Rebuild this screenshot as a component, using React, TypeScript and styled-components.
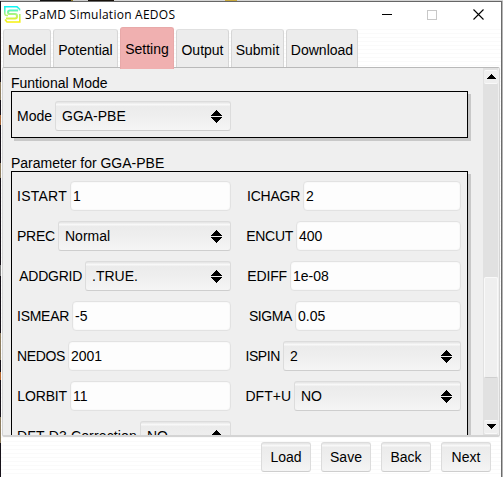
import React from "react";
import styled, { createGlobalStyle, css } from "styled-components";

const GlobalStyle = createGlobalStyle`
  * { box-sizing: border-box; }
  body { margin: 0; overflow: hidden; background: #d8d8d8; }
`;

const Desktop = styled.div`
  width: 503px;
  height: 477px;
  padding: 1px 1px 0 1px;
  overflow: hidden;
  font: 14px/16px "Liberation Sans", Arial, sans-serif;
  color: #000;
  background:
    linear-gradient(90deg, #ccc 0 40px, #111 40px 53px, #16100a 53px 71px, #8b7524 71px 73px, #ccc 73px 88px, #16100a 88px 114px, #d4d4d4 114px 225px, #c9a93c 225px 237px, #d4d4d4 237px) 0 0 / 503px 1px no-repeat,
    linear-gradient(#17121a 0 10px, #282020 10px 72px, #17121a 72px 82px, #8b7b5e 82px 100px, #17121a 100px 115px, #a4673a 115px 125px, #17121a 125px 163px, #8b7b5e 163px 178px, #17121a 178px 265px, #777 265px 276px, #17121a 276px 333px, #8b7b5e 333px 360px, #17121a 360px 372px, #b1642c 372px 380px, #17121a 380px 417px, #8b7b5e 417px 443px, #17121a 443px) 0 0 / 1px 477px no-repeat,
    #b5b5b5;
`;

const Window = styled.div`
  display: flex;
  flex-direction: column;
  height: 476px;
  border-top: 1px solid #666;
  border-right: 1px solid #6b6b6b;
  background: repeating-linear-gradient(#fff 0 3px, #fafafa 3px 4px);
`;

const TitleBar = styled.header`
  display: flex;
  align-items: center;
  flex: none;
  height: 25px;
  padding-left: 3px;
  background: #fff;
`;

const Title = styled.span`
  flex: 1;
  margin-left: 4px;
  font: 12px/16px "Open Sans", "Noto Sans", sans-serif;
  letter-spacing: 0.25px;
  white-space: nowrap;
`;

const WindowControls = styled.div`
  display: flex;
  align-items: center;
  gap: 35px;
  padding-right: 17px;
  svg { display: block; }
`;

const TabBar = styled.nav`
  display: flex;
  align-items: flex-end;
  flex: none;
  height: 42px;
  padding-left: 2px;
  position: relative;
  z-index: 1;
  margin-bottom: -2px;
`;

const Tab = styled.div<{ $width: number; $active?: boolean }>`
  flex: none;
  width: ${(p) => p.$width}px;
  height: 38px;
  margin: 0 2px 2px 0;
  padding-top: 12px;
  border: 1px solid #d6d6d6;
  border-top-color: #e0e0e0;
  border-bottom: 0;
  border-radius: 3px 3px 0 0;
  background: #ececec;
  text-align: center;
  white-space: nowrap;
  ${(p) =>
    p.$active &&
    css`
      height: 42px;
      margin-bottom: 0;
      padding-top: 13px;
      border-color: #e8a9a9;
      background: #f0b0b0;
    `}
`;

const Panel = styled.main`
  display: flex;
  flex: none;
  height: 370px;
  margin: 0 1px 0 1px;
  border: 1px solid #d4d4d4;
  border-top: 1px solid #b9b9b9;
  border-bottom-width: 2px;
  border-radius: 2px;
  background: #efefef;
  overflow: hidden;
`;

const Content = styled.div`
  flex: 1;
  height: 367px;
  padding: 7px 0 0 8px;
  overflow: hidden;
`;

const Group = styled.section`
  width: 457px;
  margin-bottom: 17px;
`;

const Legend = styled.h2`
  margin: 0;
  font: inherit;
  height: 16px;
`;

const Frame = styled.div`
  display: grid;
  grid-template-columns: 219px 230px;
  row-gap: 10px;
  padding: 9px 0 6px 0;
  border: 1px solid #000;
  box-shadow: 3px 3px 0 #c8c8c8;
`;

const Field = styled.div`
  display: flex;
  align-items: center;
  height: 30px;
`;

const Label = styled.label<{ $width: number; $tracking: number }>`
  flex: none;
  width: ${(p) => p.$width}px;
  padding-right: 3px;
  display: flex;
  justify-content: flex-end;
  letter-spacing: ${(p) => p.$tracking}px;
  white-space: nowrap;
`;

const TextBox = styled.div`
  flex: 1;
  height: 30px;
  padding: 6px 2px;
  border: 1px solid #e2e2e2;
  border-radius: 4px;
  background: #fdfdfd;
  box-shadow: inset 0 0 2px #f0f0f0;
`;

const raised = css`
  border: 1px solid #dcdcdc;
  border-bottom-color: #cecece;
  border-radius: 3px;
  background: linear-gradient(#e7e7e7 0 1px, #f8f8f8 2px 3px, #ebebeb 4px, #efefef 16px, #f5f5f5);
`;

const SelectBox = styled.div`
  ${raised}
  display: flex;
  align-items: center;
  justify-content: space-between;
  flex: 1;
  height: 30px;
  padding: 0 8px 0 6px;
  svg { display: block; }
`;

const ScrollBar = styled.div`
  display: flex;
  flex-direction: column;
  flex: none;
  width: 15px;
  margin-right: 1px;
  padding: 2px 0 1px 1px;
  background: #e1e1e1;
`;

const ScrollButton = styled.div`
  display: flex;
  align-items: center;
  justify-content: center;
  flex: none;
  height: 14px;
  padding: 0 1px 1px 0;
  border-top: 1px solid #fafafa;
  border-bottom: 1px solid #f9f9f9;
  border-radius: 2px;
  background: #efefef;
`;

const Track = styled.div`
  flex: 1;
  padding-top: 193px;
`;

const Thumb = styled.div`
  height: 101px;
  border: 1px solid #f9f9f9;
  border-bottom-color: #cfcfcf;
  border-radius: 2px;
  background: #efefef;
`;

const Footer = styled.footer`
  display: flex;
  justify-content: flex-end;
  gap: 10px;
  padding: 5px 10px 0 0;
`;

const Button = styled.button`
  ${raised}
  width: 50px;
  height: 30px;
  padding: 0;
  font: inherit;
  color: #000;
`;

type FieldSpec = {
  name: string;
  value: string;
  width: number;
  tracking?: number;
  select?: boolean;
};

const modeField: FieldSpec = { name: "Mode", value: "GGA-PBE", width: 43, select: true };

const parameters: FieldSpec[] = [
  { name: "ISTART", value: "1", width: 58, tracking: 0.25 },
  { name: "ICHAGR", value: "2", width: 72, tracking: -0.25 },
  { name: "PREC", value: "Normal", width: 46, tracking: -0.2, select: true },
  { name: "ENCUT", value: "400", width: 65, tracking: -0.3 },
  { name: "ADDGRID", value: ".TRUE.", width: 73, tracking: -0.25, select: true },
  { name: "EDIFF", value: "1e-08", width: 59, tracking: -0.15 },
  { name: "ISMEAR", value: "-5", width: 60, tracking: -0.3 },
  { name: "SIGMA", value: "0.05", width: 64, tracking: -0.4 },
  { name: "NEDOS", value: "2001", width: 56, tracking: -0.35 },
  { name: "ISPIN", value: "2", width: 52, tracking: -0.4, select: true },
  { name: "LORBIT", value: "11", width: 58, tracking: -0.15 },
  { name: "DFT+U", value: "NO", width: 63, select: true },
  { name: "DFT-D3 Correction", value: "NO", width: 128, tracking: 0.15, select: true },
];

const tabs = [
  { name: "Model", width: 48 },
  { name: "Potential", width: 65 },
  { name: "Setting", width: 54 },
  { name: "Output", width: 53 },
  { name: "Submit", width: 53 },
  { name: "Download", width: 72 },
];

function Logo() {
  return (
    <svg width="17" height="17" viewBox="0 0 17 17">
      <defs>
        <linearGradient id="logo" x1="0" y1="0" x2="0" y2="17" gradientUnits="userSpaceOnUse">
          <stop offset="0" stopColor="#00f4ff" />
          <stop offset=".5" stopColor="#b0f47a" />
          <stop offset="1" stopColor="#fff000" />
        </linearGradient>
      </defs>
      <g fill="none" stroke="url(#logo)">
        <path strokeWidth="1.6" d="M0 .8H13L15.5 3V4.5M.8 0V8Q1 9.5 3 9.5H4M15.8 8V16H3L1 13.5" />
        <path strokeWidth="2" d="M14 4.5H6Q4 4.5 4 6.3T6 8H11Q13 8 13 10.2T11 12.5H2" />
      </g>
    </svg>
  );
}

function UpDown() {
  return (
    <svg width="12" height="13" viewBox="0 0 12 13" shapeRendering="crispEdges">
      <path d="M6 0L12 6H0ZM0 7H12L6 13Z" />
    </svg>
  );
}

function FieldView({ field }: { field: FieldSpec }) {
  return (
    <Field>
      <Label $width={field.width} $tracking={field.tracking ?? 0}>
        {field.name}
      </Label>
      {field.select ? (
        <SelectBox>
          {field.value}
          <UpDown />
        </SelectBox>
      ) : (
        <TextBox>{field.value}</TextBox>
      )}
    </Field>
  );
}

export default function App() {
  return (
    <Desktop>
      <GlobalStyle />
      <Window>
        <TitleBar>
          <Logo />
          <Title>SPaMD Simulation AEDOS</Title>
          <WindowControls>
            <svg width="10" height="10" shapeRendering="crispEdges">
              <path d="M0 4.5H10" stroke="#000" />
            </svg>
            <svg width="10" height="10" shapeRendering="crispEdges">
              <rect x=".5" y=".5" width="9" height="9" fill="none" stroke="#c8c8c8" />
            </svg>
            <svg width="12" height="11">
              <path d="M1.5 .5L11.5 10.5M11.5 .5L1.5 10.5" stroke="#000" strokeWidth="1.1" />
            </svg>
          </WindowControls>
        </TitleBar>
        <TabBar>
          {tabs.map((t) => (
            <Tab key={t.name} $width={t.width} $active={t.name === "Setting"}>
              {t.name}
            </Tab>
          ))}
        </TabBar>
        <Panel>
          <Content>
            <Group>
              <Legend>Funtional Mode</Legend>
              <Frame>
                <FieldView field={modeField} />
              </Frame>
            </Group>
            <Group>
              <Legend>Parameter for GGA-PBE</Legend>
              <Frame>
                {parameters.map((p) => (
                  <FieldView key={p.name} field={p} />
                ))}
              </Frame>
            </Group>
          </Content>
          <ScrollBar>
            <ScrollButton>
              <svg width="10" height="5" shapeRendering="crispEdges">
                <path d="M5 0L10 5H0Z" />
              </svg>
            </ScrollButton>
            <Track>
              <Thumb />
            </Track>
            <ScrollButton>
              <svg width="10" height="5" shapeRendering="crispEdges">
                <path d="M0 0H10L5 5Z" />
              </svg>
            </ScrollButton>
          </ScrollBar>
        </Panel>
        <Footer>
          {["Load", "Save", "Back", "Next"].map((name) => (
            <Button key={name}>{name}</Button>
          ))}
        </Footer>
      </Window>
    </Desktop>
  );
}
